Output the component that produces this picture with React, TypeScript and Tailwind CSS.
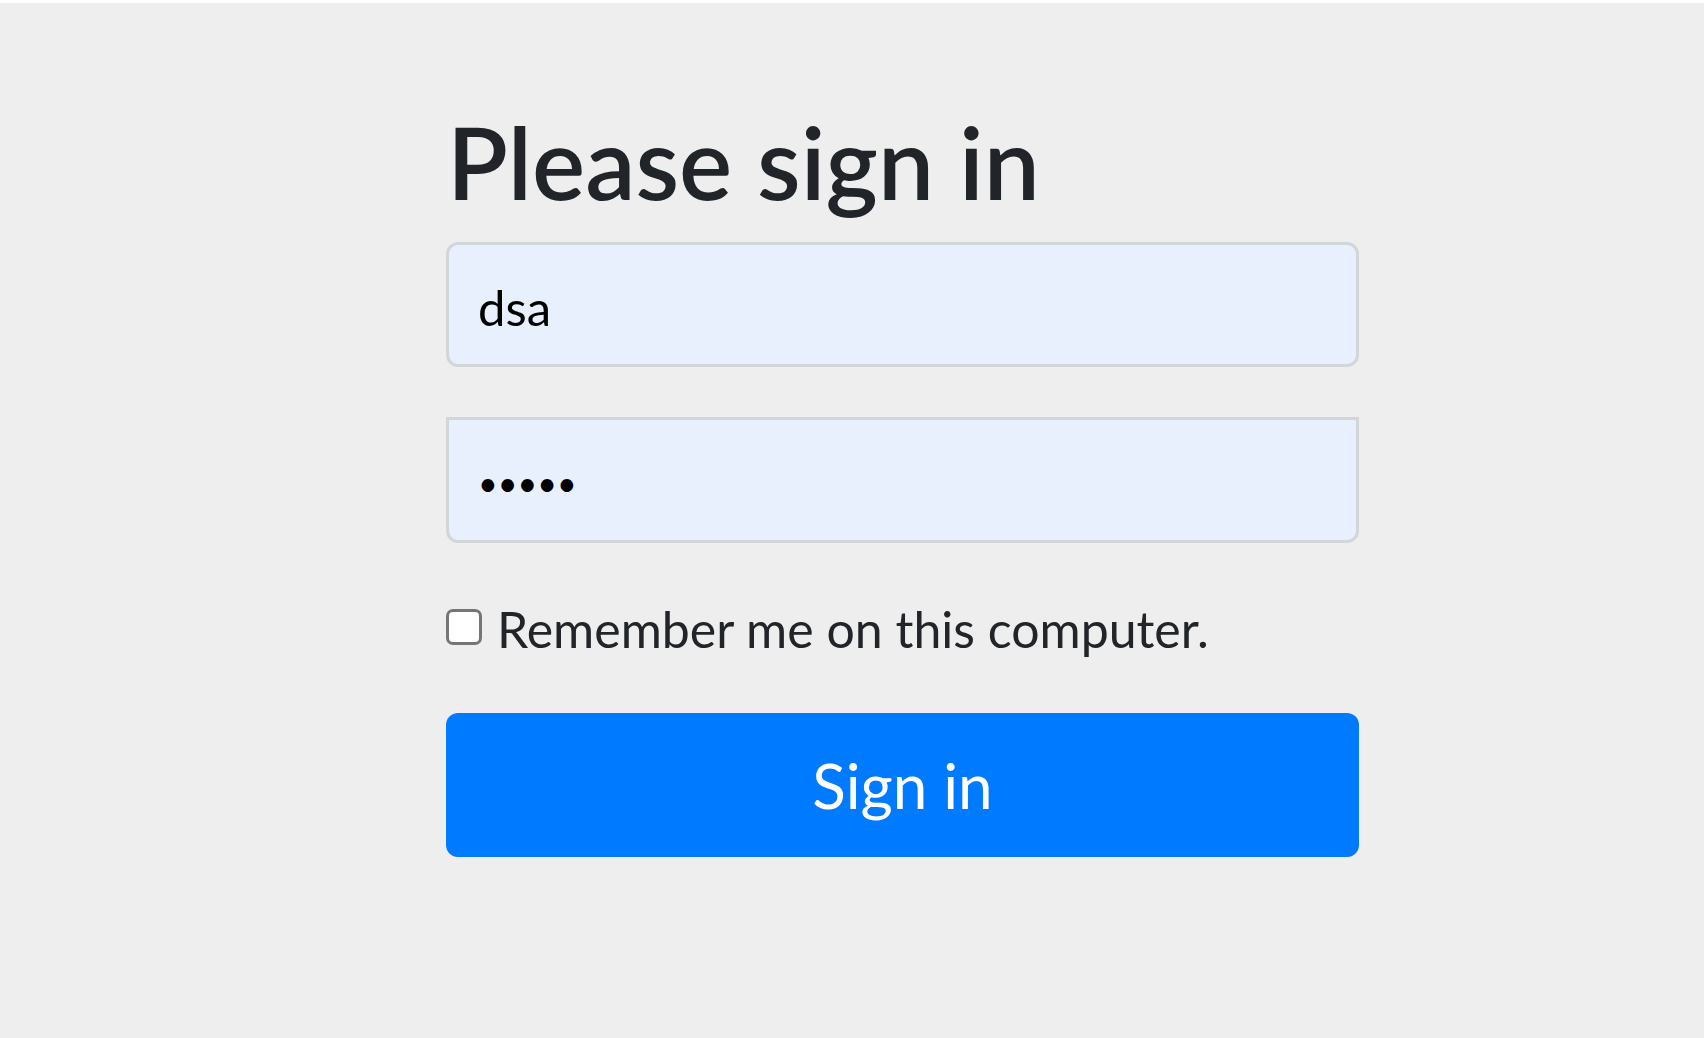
import React from 'react';

const App: React.FC = () => {
    return (
        <div className="min-h-screen bg-[#eeeeee] border-t-[3px] border-white font-['Lato',sans-serif]">
            <form className="w-[913px] ml-[446px] flex flex-col" onSubmit={(e) => e.preventDefault()}>
                <h2 className="mt-[98px] text-[100px] leading-[120px] font-semibold text-[#212529] pl-[1px]">
                    Please sign in
                </h2>

                <input
                    type="text"
                    readOnly
                    value="dsa"
                    className="mt-[21px] h-[125px] w-full rounded-[12px] border-[3px] border-[#d3d6d9] bg-[#e8f0fe] px-[29px] pt-[4px] text-[49px] text-black outline-none"
                />

                <input
                    type="password"
                    readOnly
                    value="dsa12"
                    className="mt-[50px] h-[126px] w-full rounded-b-[12px] border-[3px] border-[#d3d6d9] bg-[#e8f0fe] px-[29px] pt-[4px] text-[34px] text-black outline-none"
                />

                <div className="mt-[55px] h-[58px] flex items-center">
                    <input
                        type="checkbox"
                        className="appearance-none w-[36px] h-[36px] shrink-0 rounded-[7px] border-[3px] border-[#767676] bg-white"
                    />
                    <span className="ml-[15px] mt-[4px] text-[50px] leading-[58px] text-[#212529]">
                        Remember me on this computer.
                    </span>
                </div>

                <button
                    type="submit"
                    className="mt-[57px] h-[144px] w-full rounded-[12px] bg-[#007bff] text-white text-[62px] leading-none"
                >
                    Sign in
                </button>
            </form>
        </div>
    );
};

export default App;
